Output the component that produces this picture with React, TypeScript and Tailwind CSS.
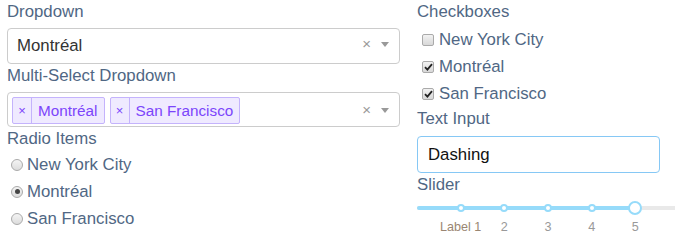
const LABEL = "text-[16.8px] leading-[24px] text-[#506784]";
const FONT = { fontFamily: '"Liberation Sans", Arial, Helvetica, sans-serif' };

const cities = ["New York City", "Montréal", "San Francisco"];

function ClearAndCaret() {
  return (
    <div className="flex items-center gap-[10px] pr-[10px] -mt-[5px]">
      <span className="text-[15px] leading-none text-[#999]">×</span>
      <span className="w-0 h-0 border-x-[4.5px] border-x-transparent border-t-[5px] border-t-[#999] mt-[2px]" />
    </div>
  );
}

function Tag({ label }: { label: string }) {
  return (
    <div className="flex h-[27px] items-stretch rounded-[2px] border border-[#c4b3fc] bg-[#efeaff] text-[#7c45fb]">
      <span className="flex w-[19px] items-center justify-center border-r border-[#c4b3fc] text-[13px] leading-none">
        ×
      </span>
      <span className="flex items-center px-[6px] text-[15.3px] leading-none">{label}</span>
    </div>
  );
}

function Radio({ checked }: { checked: boolean }) {
  return (
    <span className="flex h-[12px] w-[12px] items-center justify-center rounded-full border border-[#aaa] bg-gradient-to-b from-[#f4f4f4] to-[#dcdcdc]">
      {checked && <span className="h-[5px] w-[5px] rounded-full bg-[#444]" />}
    </span>
  );
}

function Check({ checked }: { checked: boolean }) {
  return (
    <span className="flex h-[12px] w-[12px] items-center justify-center rounded-[2px] border border-[#aaa] bg-gradient-to-b from-[#f2f2f2] to-[#d8d8d8]">
      {checked && (
        <svg width="9" height="8" viewBox="0 0 9 8">
          <path d="M1 4.2 L3.4 6.6 L8 1.2" fill="none" stroke="#222" strokeWidth="1.8" />
        </svg>
      )}
    </span>
  );
}

const marks = [
  { v: 1, label: "Label 1", color: "text-[#9a8672]" },
  { v: 2, label: "2", color: "text-[#999]" },
  { v: 3, label: "3", color: "text-[#999]" },
  { v: 4, label: "4", color: "text-[#999]" },
  { v: 5, label: "5", color: "text-[#999]" },
];

function Slider() {
  const max = 9;
  const value = 5;
  const pct = (v: number) => `${(v / max) * 100}%`;
  return (
    <div className="relative h-[40px] w-full">
      <div className="absolute left-0 right-0 top-[9px] h-[4px] rounded-full bg-[#e9e9e9]" />
      <div className="absolute left-0 top-[9px] h-[4px] rounded-full bg-[#96dbfa]" style={{ width: pct(value) }} />
      {marks.slice(0, 4).map((m) => (
        <span
          key={m.v}
          className="absolute top-[7px] h-[8px] w-[8px] -translate-x-1/2 rounded-full border-2 border-[#96dbfa] bg-white"
          style={{ left: pct(m.v) }}
        />
      ))}
      <span
        className="absolute top-[4px] h-[14px] w-[14px] -translate-x-1/2 rounded-full border-2 border-[#96dbfa] bg-white"
        style={{ left: pct(value) }}
      />
      {marks.map((m) => (
        <span
          key={m.v}
          className={`absolute top-[22px] -translate-x-1/2 whitespace-nowrap text-[12.6px] leading-[16px] ${m.color}`}
          style={{ left: pct(m.v) }}
        >
          {m.label}
        </span>
      ))}
    </div>
  );
}

export default function App() {
  return (
    <div className="h-[244px] w-[675px] overflow-hidden bg-white" style={FONT}>
      <div className="flex w-[817px] pl-[7px]">
        {/* left column */}
        <div className="w-[393px] shrink-0">
          <div className={LABEL}>Dropdown</div>
          <div className="mt-[4px] flex h-[36px] items-center justify-between rounded-[4px] border border-[#ccc] pl-[9px]">
            <span className="text-[16.8px] text-[#333]">Montréal</span>
            <ClearAndCaret />
          </div>
          <div className={LABEL}>Multi-Select Dropdown</div>
          <div className="mt-[4px] flex h-[35px] items-start justify-between rounded-[4px] border border-[#ccc] pl-[4px] pt-[4px]">
            <div className="flex gap-[5px]">
              <Tag label="Montréal" />
              <Tag label="San Francisco" />
            </div>
            <div className="mt-[10px]">
              <ClearAndCaret />
            </div>
          </div>
          <div className={LABEL}>Radio Items</div>
          <div className="flex flex-col">
            {cities.map((c) => (
              <label key={c} className="flex h-[27px] items-center gap-[4px] pl-[4px] text-[16.8px] text-[#506784]">
                <Radio checked={c === "Montréal"} />
                <span>{c}</span>
              </label>
            ))}
          </div>
        </div>

        {/* right column */}
        <div className="ml-[17px] w-[393px] shrink-0">
          <div className={LABEL}>Checkboxes</div>
          <div className="mt-[2px] flex flex-col">
            {cities.map((c) => (
              <label key={c} className="flex h-[27px] items-center gap-[5px] pl-[5px] text-[16.8px] text-[#506784]">
                <Check checked={c !== "New York City"} />
                <span>{c}</span>
              </label>
            ))}
          </div>
          <div className={LABEL}>Text Input</div>
          <div className="mt-[5px] flex h-[37px] w-[243px] items-center rounded-[4px] border-[1.5px] border-[#86c8f5] pl-[10px] text-[16.8px] text-[#111]">
            Dashing
          </div>
          <div className={LABEL}>Slider</div>
          <Slider />
        </div>
      </div>
    </div>
  );
}
